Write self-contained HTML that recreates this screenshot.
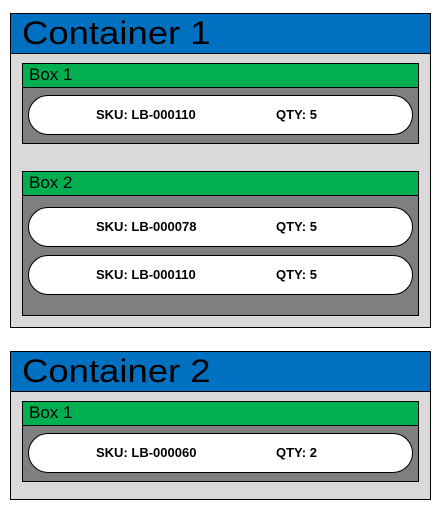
<!DOCTYPE html>
<html><head><style>
body{margin:0;width:446px;height:514px;background:#fff;position:relative;font-family:"Liberation Sans",sans-serif;overflow:hidden}
div{position:absolute;box-sizing:border-box}
.c{border:1px solid #000;background:#d9d9d9;left:10px;width:421px}
.h{background:#0070c0;border-bottom:1px solid #000;left:0;top:0;width:419px;height:40px;color:#000}
.h span{position:absolute;left:11px;top:0;font-size:32px;line-height:38px;transform:scaleX(1.14);transform-origin:left}
.g{background:#7f7f7f;border:1px solid #000;left:11px;width:397px}
.gh{background:#00b050;border-bottom:1px solid #000;left:0;top:0;width:395px;height:24px;font-size:17px;line-height:22px;padding-left:6px}
.p{background:#fff;border:1px solid #000;border-radius:20px;left:5px;width:385px;height:40px;font-weight:bold;font-size:13px;line-height:38px}
.p span{position:absolute}
</style></head><body>
<div class="c" style="top:13px;height:315px">
 <div class="h"><span>Container 1</span></div>
 <div class="g" style="top:49px;height:81px">
  <div class="gh">Box 1</div>
  <div class="p" style="top:31px"><span style="left:67px">SKU: LB-000110</span><span style="left:247px">QTY: 5</span></div>
 </div>
 <div class="g" style="top:157px;height:145px">
  <div class="gh">Box 2</div>
  <div class="p" style="top:35px"><span style="left:67px">SKU: LB-000078</span><span style="left:247px">QTY: 5</span></div>
  <div class="p" style="top:83px"><span style="left:67px">SKU: LB-000110</span><span style="left:247px">QTY: 5</span></div>
 </div>
</div>
<div class="c" style="top:351px;height:149px">
 <div class="h"><span>Container 2</span></div>
 <div class="g" style="top:49px;height:81px">
  <div class="gh">Box 1</div>
  <div class="p" style="top:31px"><span style="left:67px">SKU: LB-000060</span><span style="left:247px">QTY: 2</span></div>
 </div>
</div>
</body></html>
